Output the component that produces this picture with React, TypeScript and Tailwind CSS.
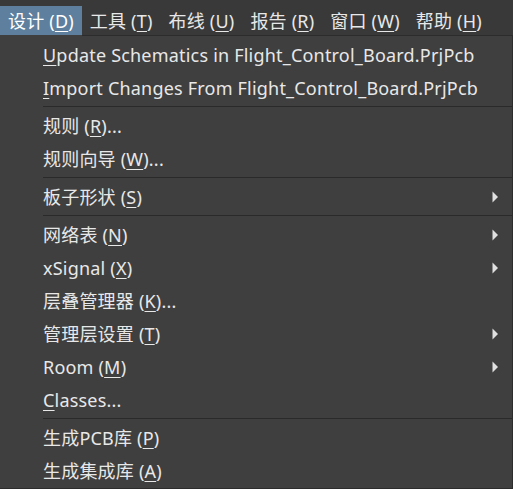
import React from "react";

type Item =
  | { sep: true }
  | { sep?: false; pre: string; key: string; post: string; sub?: boolean };

const menuBar = [
  { pre: "设计 (", key: "D", post: ")" },
  { pre: "工具 (", key: "T", post: ")" },
  { pre: "布线 (", key: "U", post: ")" },
  { pre: "报告 (", key: "R", post: ")" },
  { pre: "窗口 (", key: "W", post: ")" },
  { pre: "帮助 (", key: "H", post: ")" },
];

const items: Item[] = [
  { pre: "", key: "U", post: "pdate Schematics in Flight_Control_Board.PrjPcb" },
  { pre: "", key: "I", post: "mport Changes From Flight_Control_Board.PrjPcb" },
  { sep: true },
  { pre: "规则 (", key: "R", post: ")..." },
  { pre: "规则向导 (", key: "W", post: ")..." },
  { sep: true },
  { pre: "板子形状 (", key: "S", post: ")", sub: true },
  { sep: true },
  { pre: "网络表 (", key: "N", post: ")", sub: true },
  { pre: "xSignal (", key: "X", post: ")", sub: true },
  { pre: "层叠管理器 (", key: "K", post: ")..." },
  { pre: "管理层设置 (", key: "T", post: ")", sub: true },
  { pre: "Room (", key: "M", post: ")", sub: true },
  { pre: "", key: "C", post: "lasses..." },
  { sep: true },
  { pre: "生成PCB库 (", key: "P", post: ")" },
  { pre: "生成集成库 (", key: "A", post: ")" },
];

function Label({ pre, k, post }: { pre: string; k: string; post: string }) {
  return (
    <span className="whitespace-pre">
      {pre}
      <span className="underline decoration-1 underline-offset-[3px]">{k}</span>
      {post}
    </span>
  );
}

function Arrow() {
  return (
    <svg width="7" height="12" viewBox="0 0 7 12" className="mr-[13px]">
      <path d="M0.5 0.5 L6 6 L0.5 11.5 Z" fill="#e0e0e0" />
    </svg>
  );
}

export default function App() {
  return (
    <div
      className="w-[513px] h-[489px] overflow-hidden bg-[#393939] text-[#e8e8e8] text-[18px] tracking-[0.2px] leading-none"
      style={{ fontFamily: '"Noto Sans", "Noto Sans CJK SC", sans-serif' }}
    >
      <div className="flex h-[35px] items-end">
        {menuBar.map((m, i) => (
          <div
            key={m.key}
            className={
              i === 0
                ? "h-[29px] flex items-center pt-px px-[8px] bg-[#5f7f9e] text-white"
                : "h-[29px] flex items-center pt-px px-[8px]"
            }
          >
            <Label pre={m.pre} k={m.key} post={m.post} />
          </div>
        ))}
      </div>
      <div className="h-[454px] bg-[#3f3f3f] border-r border-b border-[#2c2c2c] pt-[3px] relative">
        <div className="absolute top-0 left-[82px] right-0 h-px bg-[#2c2c2c]" />
        {items.map((it, i) =>
          it.sep ? (
            <div key={i} className="h-[5px] flex items-center pl-[43px]">
              <div className="h-px w-full bg-[#2a2a2a]" />
            </div>
          ) : (
            <div key={i} className="h-[33px] flex items-center justify-between pl-[43px]">
              <Label pre={it.pre} k={it.key} post={it.post} />
              {it.sub && <Arrow />}
            </div>
          )
        )}
      </div>
    </div>
  );
}
